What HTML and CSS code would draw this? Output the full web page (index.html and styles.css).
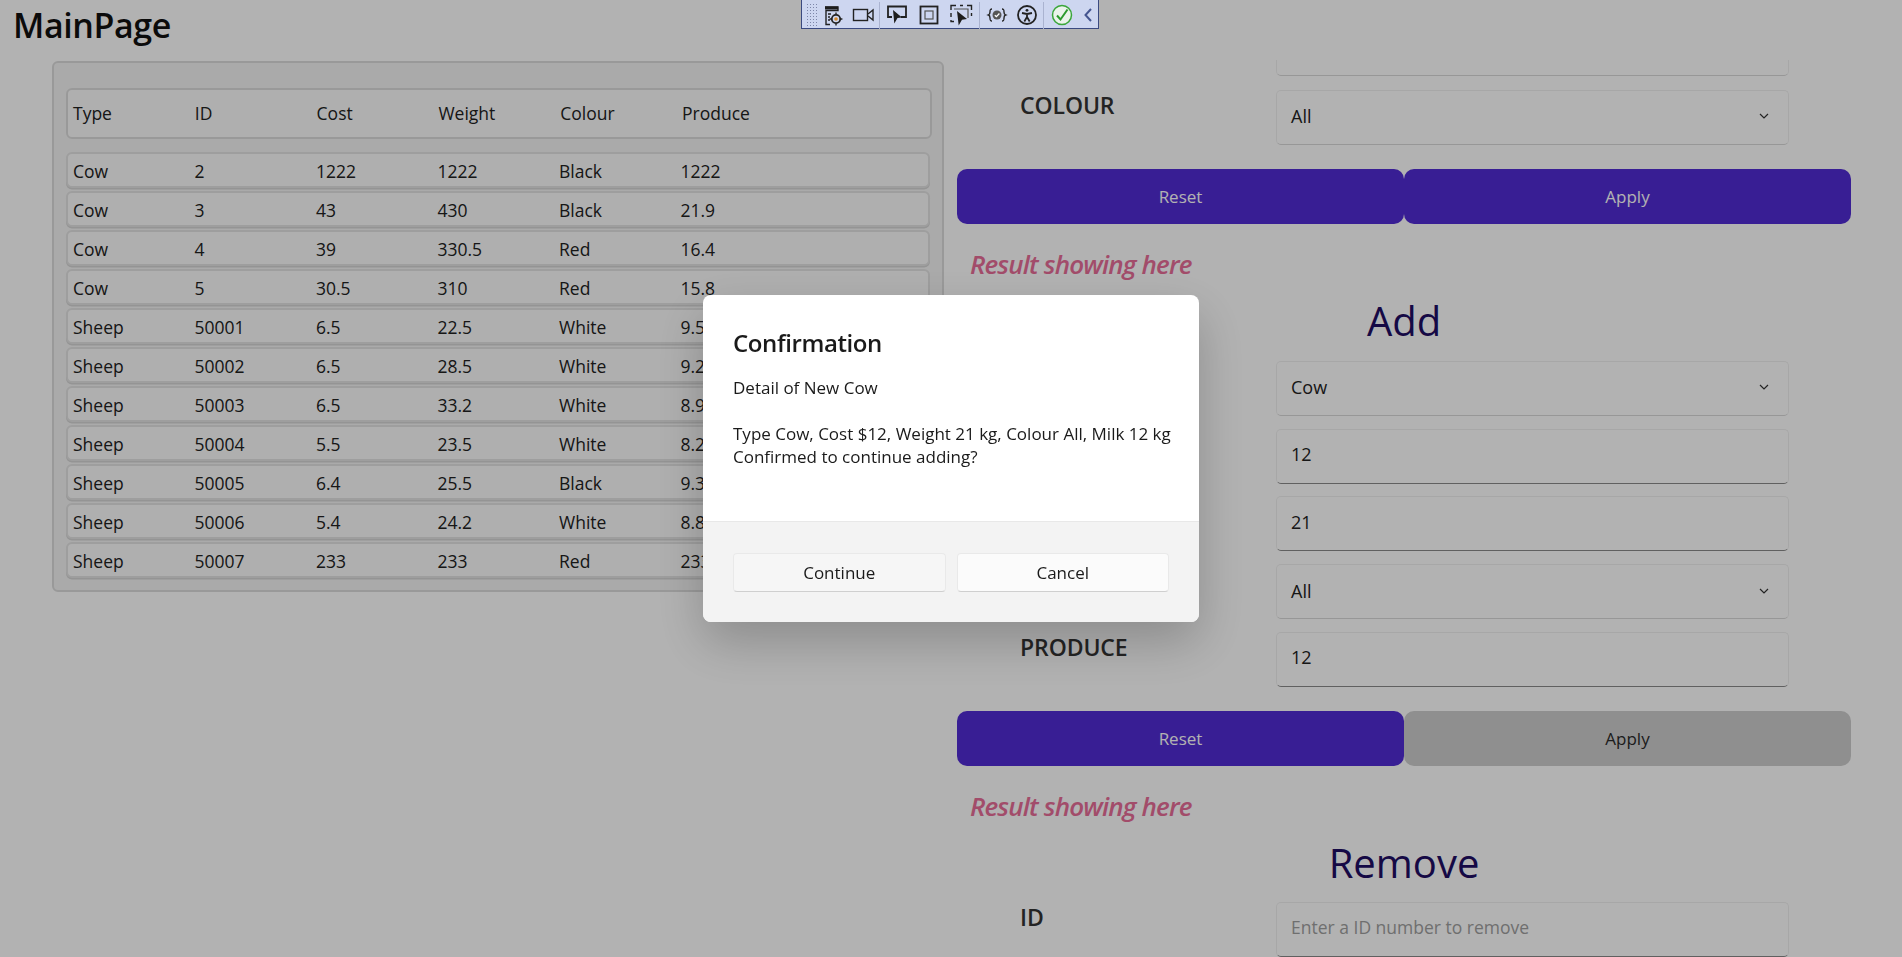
FILE: index.html
```html
<!DOCTYPE html>
<html lang="en">
<head>
<meta charset="utf-8">
<title>MainPage</title>
<link rel="stylesheet" href="styles.css">
</head>
<body>
<header class="page-header"><h1 class="page-title">MainPage</h1></header>
<main class="layout">
  <section class="left">
    <div class="panel">
      <div class="row row-head"><span>Type</span><span>ID</span><span>Cost</span><span>Weight</span><span>Colour</span><span>Produce</span></div>
      <div class="rows">
        <div class="row"><span>Cow</span><span>2</span><span>1222</span><span>1222</span><span>Black</span><span>1222</span></div>
        <div class="row"><span>Cow</span><span>3</span><span>43</span><span>430</span><span>Black</span><span>21.9</span></div>
        <div class="row"><span>Cow</span><span>4</span><span>39</span><span>330.5</span><span>Red</span><span>16.4</span></div>
        <div class="row"><span>Cow</span><span>5</span><span>30.5</span><span>310</span><span>Red</span><span>15.8</span></div>
        <div class="row"><span>Sheep</span><span>50001</span><span>6.5</span><span>22.5</span><span>White</span><span>9.5</span></div>
        <div class="row"><span>Sheep</span><span>50002</span><span>6.5</span><span>28.5</span><span>White</span><span>9.2</span></div>
        <div class="row"><span>Sheep</span><span>50003</span><span>6.5</span><span>33.2</span><span>White</span><span>8.9</span></div>
        <div class="row"><span>Sheep</span><span>50004</span><span>5.5</span><span>23.5</span><span>White</span><span>8.2</span></div>
        <div class="row"><span>Sheep</span><span>50005</span><span>6.4</span><span>25.5</span><span>Black</span><span>9.3</span></div>
        <div class="row"><span>Sheep</span><span>50006</span><span>5.4</span><span>24.2</span><span>White</span><span>8.8</span></div>
        <div class="row"><span>Sheep</span><span>50007</span><span>233</span><span>233</span><span>Red</span><span>233</span></div>
      </div>
    </div>
  </section>
  <section class="right">
    <div class="fields">
      <div class="field field-clipped"><span></span><div class="control control-clipped"></div></div>
      <div class="field"><label class="field-label">COLOUR</label><div class="control select"><span>All</span><svg class="chev" viewBox="0 0 10 6"><path d="M1 1l4 4 4-4"/></svg></div></div>
    </div>
    <div class="actions"><button class="btn">Reset</button><button class="btn">Apply</button></div>
    <p class="result">Result showing here</p>
    <h2 class="section-title">Add</h2>
    <div class="fields fields-add">
      <div class="field"><label class="field-label">TYPE</label><div class="control select"><span>Cow</span><svg class="chev" viewBox="0 0 10 6"><path d="M1 1l4 4 4-4"/></svg></div></div>
      <div class="field"><label class="field-label">COST</label><input class="control entry" value="12"></div>
      <div class="field"><label class="field-label">WEIGHT</label><input class="control entry" value="21"></div>
      <div class="field"><label class="field-label">COLOUR</label><div class="control select"><span>All</span><svg class="chev" viewBox="0 0 10 6"><path d="M1 1l4 4 4-4"/></svg></div></div>
      <div class="field"><label class="field-label">PRODUCE</label><input class="control entry" value="12"></div>
    </div>
    <div class="actions"><button class="btn">Reset</button><button class="btn btn-disabled">Apply</button></div>
    <p class="result">Result showing here</p>
    <h2 class="section-title">Remove</h2>
    <div class="fields">
      <div class="field"><label class="field-label">ID</label><input class="control entry" placeholder="Enter a ID number to remove"></div>
    </div>
  </section>
</main>

<div class="scrim"></div>

<div class="dialog" role="dialog">
  <div class="dialog-body">
    <h3 class="dialog-title">Confirmation</h3>
    <p class="dialog-text">Detail of New Cow<br><br>Type Cow, Cost $12, Weight 21 kg, Colour All, Milk 12 kg<br>Confirmed to continue adding?</p>
  </div>
  <div class="dialog-footer">
    <button class="dialog-btn dialog-btn-hover">Continue</button>
    <button class="dialog-btn">Cancel</button>
  </div>
</div>

<div class="toolbar">
  <div class="grip"></div>
  <div class="tool-group g1">
    <svg class="ti" viewBox="0 0 24 24"><path class="k" d="M5 4h13v3.500H6v14h4"/><path class="f" d="M5 3.500h13v3H5z"/><path class="k" d="M8 11h3M8 14h2M8 17h2"/><circle class="k2" cx="16" cy="16" r="4.200"/><circle class="o" cx="16" cy="16" r="1.800"/><path class="k" d="M16 9.600v2M16 20.400v2M9.600 16h2M20.400 16h2"/></svg>
    <svg class="ti" viewBox="0 0 24 24"><rect class="k" x="2.500" y="6.500" width="14" height="11"/><path class="k" d="M17 11l5-4v10l-5-4"/></svg>
  </div>
  <div class="sep sep1"></div>
  <div class="tool-group g2">
    <svg class="ti" viewBox="0 0 24 24"><path class="k2" d="M7 14H3V3.500h18V14h-5"/><path class="f" d="M8 7l9 7.500-4.500.5-3.200 5.500z"/></svg>
    <svg class="ti" viewBox="0 0 24 24"><rect class="k2" x="3.500" y="3.500" width="17" height="17"/><rect class="g" x="8" y="8" width="8" height="8"/></svg>
    <svg class="ti" viewBox="0 0 24 24"><path class="k" d="M2 7V2.500h5M11 2.500h3M18 2.500h4.500V7M2 10v4M22.500 10v3M2 17v1.500h3"/><path class="g" d="M5 6h14v9"/><path class="f" d="M8 8l10 8-5 .7-3.300 5.800z"/></svg>
  </div>
  <div class="sep sep2"></div>
  <div class="tool-group g3">
    <svg class="ti" viewBox="0 0 24 24"><path class="k" d="M7 6c-2 0-2 1-2 3s0 2.500-1.500 3C5 12.500 5 13 5 15s0 3 2 3M17 6c2 0 2 1 2 3s0 2.500 1.500 3c-1.500.5-1.500 1-1.500 3s0 3-2 3"/><circle class="gf" cx="12" cy="12" r="4.500"/><path class="w" d="M9.800 12.200l1.600 1.500 3-3.200"/></svg>
    <svg class="ti" viewBox="0 0 24 24"><circle class="k2" cx="12" cy="12" r="9"/><circle class="fc" cx="12" cy="7.300" r="1.400"/><path class="k2" d="M7 10l5 1 5-1M12 11v3M12 14l-2.700 4.500M12 14l2.700 4.500"/></svg>
  </div>
  <div class="sep sep3"></div>
  <svg class="ti ti-check" viewBox="0 0 24 24"><circle class="cc" cx="12" cy="12" r="9.500"/><path class="ck" d="M7 12.500l3.500 4L17.500 6.500"/></svg>
  <svg class="ti-chev" viewBox="0 0 10 16"><path d="M8 2L2.500 8 8 14"/></svg>
</div>
</body>
</html>
```
FILE: styles.css
```css
* { box-sizing: border-box; }
html, body { margin: 0; height: 957px; overflow: hidden; background: #fff; }
body { font-family: "Open Sans", "Noto Sans", sans-serif; color: #1c1c1c; }

.page-header { height: 50px; padding-left: 13px; }
.page-title { margin: 0; font-size: 34px; font-weight: 600; line-height: 50px; color: #111; letter-spacing: -0.4px; }

.layout { display: flex; align-items: flex-start; }
.left { width: 957px; padding: 11px 0 0 52px; flex: none; }
.panel { width: 892px; padding: 25px 11px 12px 12px; background: #f4f4f4; border: 2.500px solid #dcdcdc; border-radius: 6px; }
.row { display: grid; grid-template-columns: repeat(6, 121.500px); align-items: center; height: 36px; width: 864px; padding: 2px 0 0 5px; font-size: 17.500px; background: #fbfbfb; border: 2px solid #e2e2e2; border-radius: 6px; box-shadow: 0 1.500px 0 #d4d4d4; color: #222; }
.row-head { grid-template-columns: repeat(6, 121.800px); width: 866px; height: 51px; padding: 0 0 2px 5px; border: 2.500px solid #dcdcdc; margin-bottom: 13px; box-shadow: none; }
.rows { display: flex; flex-direction: column; gap: 3px; }

.right { width: 945px; flex: none; padding-top: 10px; overflow: hidden; }
.fields { display: flex; flex-direction: column; gap: 12.750px; }
.fields-add { margin-top: 1px; }
.field { display: grid; grid-template-columns: 319px 513px; height: 55px; }
.field-clipped { height: 16px; margin-bottom: 1px; }
.field-label { padding-left: 63px; font-size: 23px; font-weight: 600; line-height: 30px; color: #333; letter-spacing: -0.1px; }
.control { width: 513px; height: 55px; padding: 0 14px 2px; font: 18px "Open Sans", sans-serif; color: #222; background: #fff; border: 1px solid #f0f0f0; border-bottom: 1px solid #d8d8d8; border-radius: 5px; outline: none; }
.control-clipped { height: 16px; border-top: 0; border-radius: 0 0 5px 5px; }
.select { display: flex; align-items: center; justify-content: space-between; }
.entry { padding-bottom: 4px; border-bottom-color: #8a8a8a; }
.entry::placeholder { color: #a0a0a0; opacity: 1; font-size: 17.500px; }
.chev { width: 10px; height: 6px; margin-right: 5px; fill: none; stroke: #333; stroke-width: 1.200; }

.actions { display: flex; width: 894px; margin-top: 24px; }
.btn { flex: 1; height: 55px; font: 17px "Open Sans", sans-serif; color: #fff; background: #512bd4; border: 0; border-radius: 10px; }
.btn-disabled { background: #cdcdcd; color: #2a2a2a; }
.result { margin: 24px 0 0; padding-left: 13px; height: 33px; font-size: 26px; font-weight: 600; font-style: italic; line-height: 33px; color: #e86d98; letter-spacing: -0.850px; }
.section-title { width: 894px; margin: 0; height: 79px; font-size: 40px; font-weight: 400; line-height: 80px; text-align: center; color: #1f0d63; }

.scrim { position: fixed; inset: 0; background: rgba(0, 0, 0, 0.3); z-index: 1; }

.dialog { position: fixed; left: 703px; top: 295px; width: 496px; height: 327px; display: flex; flex-direction: column; background: #fff; border-radius: 8px; box-shadow: 0 20px 50px rgba(0, 0, 0, 0.22); z-index: 2; overflow: hidden; }
.dialog-body { height: 226px; padding: 33px 30px 0; }
.dialog-title { margin: 0 0 18px; font-size: 24px; font-weight: 600; line-height: 30px; color: #1a1a1a; letter-spacing: -0.400px; }
.dialog-text { margin: 0; font-size: 17px; line-height: 23px; color: #1a1a1a; white-space: nowrap; }
.dialog-footer { flex: 1; display: flex; gap: 11px; padding: 31px 30px 0; background: #f3f3f3; border-top: 1px solid #e8e8e8; }
.dialog-btn { flex: 1; height: 39px; font: 17px "Open Sans", sans-serif; color: #1a1a1a; background: #fbfbfb; border: 1px solid #e9e9e9; border-bottom-color: #cfcfcf; border-radius: 4px; }
.dialog-btn-hover { background: #f6f6f6; }

.toolbar { position: fixed; left: 801px; top: 0; width: 298px; height: 29px; display: flex; align-items: center; padding: 2px 0 0 4px; background: #cdd6f0; border: 1px solid #3b4a80; border-top: 0; z-index: 3; }
.grip { width: 11px; height: 24px; flex: none; background-image: radial-gradient(#7d86a8 0.800px, transparent 1px); background-size: 3px 3px; }
.tool-group { display: flex; align-items: center; }
.ti { width: 24px; height: 24px; flex: none; fill: none; }
.g1 { gap: 7px; margin-left: 3px; }
.g2 { gap: 8px; margin-left: 5px; }
.g3 { gap: 6px; margin-left: 5px; }
.sep { width: 1px; height: 27px; flex: none; background: #aab3d0; margin-left: 4px; }
.sep2 { margin-left: 6px; }
.ti-check { margin-left: 6px; }
.ti-chev { width: 10px; height: 16px; margin-left: 9px; flex: none; fill: none; stroke: #44558f; stroke-width: 2; }
.k { fill: none; stroke: #222; stroke-width: 1.400; }
.k2 { fill: none; stroke: #222; stroke-width: 1.800; }
.f { fill: #1d1d1d; }
.fc { fill: #222; }
.g { fill: none; stroke: #555; stroke-width: 1.200; }
.gf { fill: #555; }
.o { fill: #d58a2c; }
.w { fill: none; stroke: #fff; stroke-width: 1.300; }
.cc { fill: #eaf3ea; stroke: #3aa63a; stroke-width: 1.500; }
.ck { fill: none; stroke: #2c9a2c; stroke-width: 2; }
```
